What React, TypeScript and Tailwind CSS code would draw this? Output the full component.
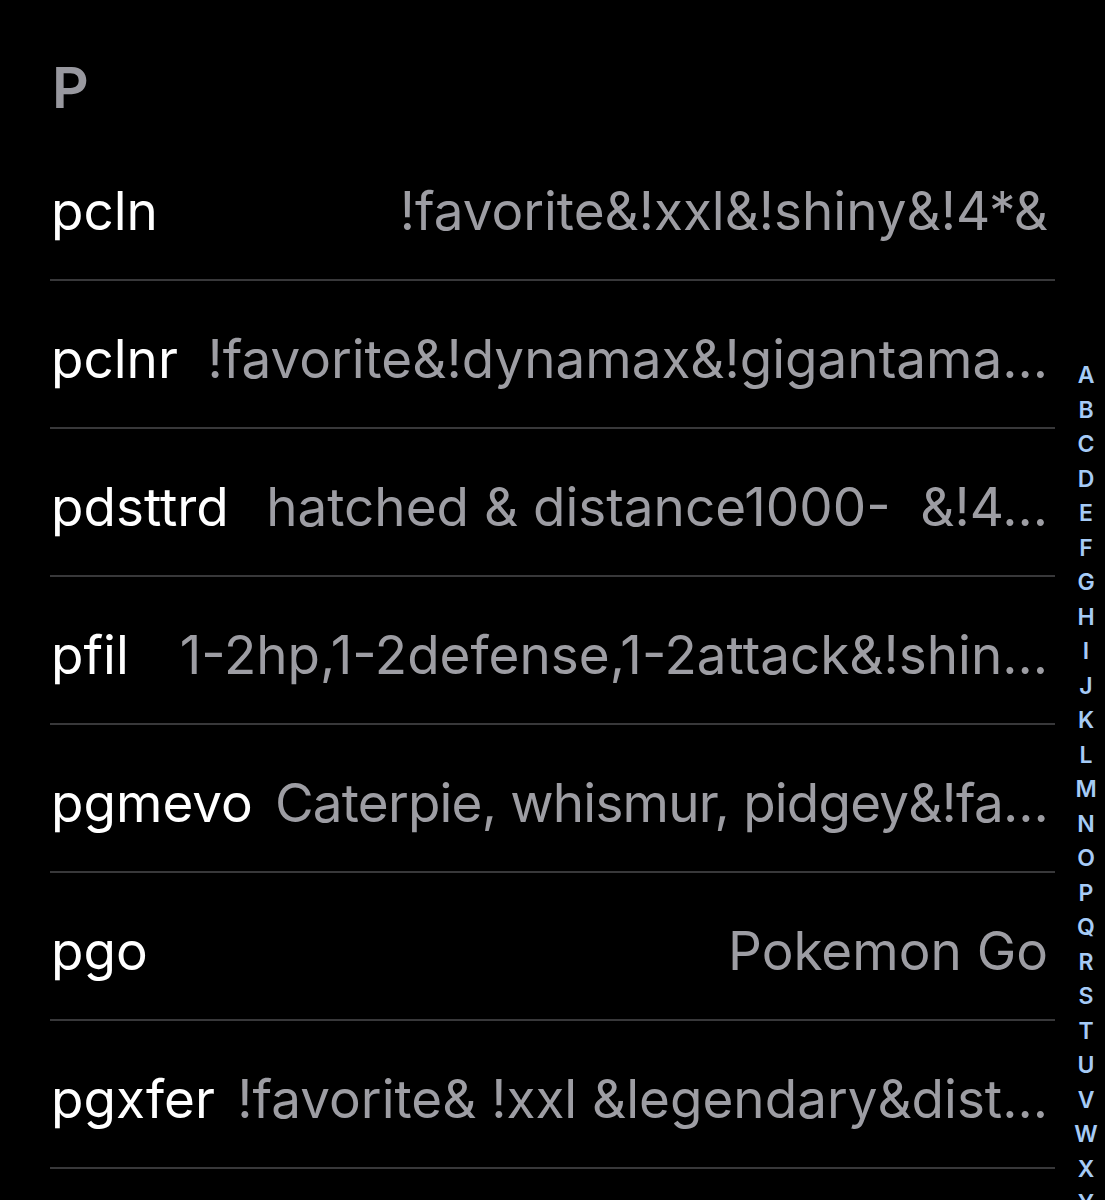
import React from 'react';

interface Shortcut {
  phrase: string;
  text: string;
  tight?: boolean;
}

const shortcuts: Shortcut[] = [
  { phrase: 'pcln', text: '!favorite&!xxl&!shiny&!4*&' },
  { phrase: 'pclnr', text: '!favorite&!dynamax&!gigantama…' },
  { phrase: 'pdsttrd', text: 'hatched & distance1000-  &!4…' },
  { phrase: 'pfil', text: '1-2hp,1-2defense,1-2attack&!shin…' },
  { phrase: 'pgmevo', text: 'Caterpie, whismur, pidgey&!fa…', tight: true },
  { phrase: 'pgo', text: 'Pokemon Go' },
  { phrase: 'pgxfer', text: '!favorite& !xxl &legendary&dist…' },
];

const letters = 'ABCDEFGHIJKLMNOPQRSTUVWXYZ#'.split('');

export default function App() {
  return (
    <div
      className="relative h-[1200px] w-[1105px] overflow-hidden bg-black"
      style={{ fontFamily: 'Inter, "Noto Sans", sans-serif' }}
    >
      {/* section header */}
      <div className="h-[133px] pl-[52px] pt-[59px]">
        <div className="text-[57px] font-semibold leading-none text-[#98989f]">P</div>
      </div>

      {/* rows */}
      <div className="ml-[50px] w-[1005px]">
        {shortcuts.map((s) => (
          <div
            key={s.phrase}
            className="box-border flex h-[148px] items-center gap-5 border-b-2 border-[#38383a] pt-3 pr-[7px] pl-[1px]"
          >
            <span className="shrink-0 text-[53px] leading-normal text-white">{s.phrase}</span>
            <span
              className={`min-w-0 flex-1 whitespace-pre text-right text-[53px] leading-normal text-[#9d9da3] ${
                s.tight ? 'tracking-[-0.8px]' : 'tracking-normal'
              }`}
            >
              {s.text}
            </span>
          </div>
        ))}
      </div>

      {/* section index */}
      <div className="absolute top-[358px] left-[1071px] flex w-[30px] flex-col">
        {letters.map((l) => (
          <div key={l} className="h-[34.5px] text-center text-[23px] leading-[34.5px] font-semibold text-[#a6cbf6]">
            {l}
          </div>
        ))}
      </div>
    </div>
  );
}
